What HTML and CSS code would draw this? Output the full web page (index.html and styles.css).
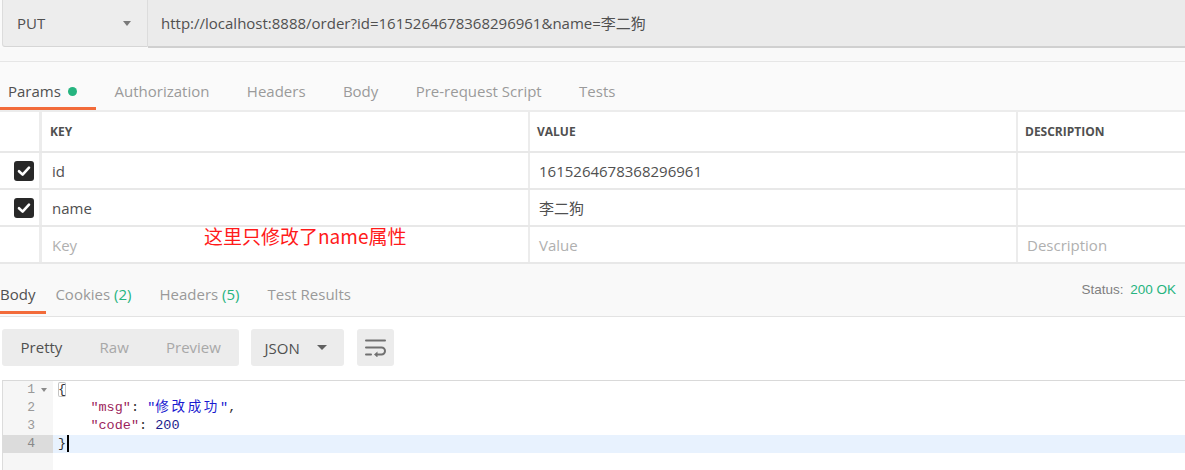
FILE: index.html
```html
<!DOCTYPE html>
<html lang="zh">
<head>
<meta charset="utf-8">
<title>Postman</title>
<link rel="stylesheet" href="styles.css">
</head>
<body>
<div class="request-bar">
  <div class="method"><span>PUT</span><span class="caret"></span></div>
  <div class="url">http://localhost:8888/order?id=1615264678368296961&amp;name=李二狗</div>
</div>
<div class="gap"></div>
<div class="req-tabs">
  <div class="tab first active">Params<span class="dot"></span></div>
  <div class="tab">Authorization</div>
  <div class="tab">Headers</div>
  <div class="tab">Body</div>
  <div class="tab">Pre-request Script</div>
  <div class="tab">Tests</div>
</div>
<div class="params">
  <div class="row head">
    <div class="c-check"></div>
    <div class="c-key">KEY</div>
    <div class="c-val">VALUE</div>
    <div class="c-desc">DESCRIPTION</div>
  </div>
  <div class="row">
    <div class="c-check"><span class="cb"><svg viewBox="0 0 20 20" width="20" height="20"><path d="M5 10.2 L8.6 13.6 L15 6.6" fill="none" stroke="#fff" stroke-width="2.6" stroke-linecap="round" stroke-linejoin="round"/></svg></span></div>
    <div class="c-key">id</div>
    <div class="c-val">1615264678368296961</div>
    <div class="c-desc"></div>
  </div>
  <div class="row">
    <div class="c-check"><span class="cb"><svg viewBox="0 0 20 20" width="20" height="20"><path d="M5 10.2 L8.6 13.6 L15 6.6" fill="none" stroke="#fff" stroke-width="2.6" stroke-linecap="round" stroke-linejoin="round"/></svg></span></div>
    <div class="c-key">name</div>
    <div class="c-val">李二狗</div>
    <div class="c-desc"></div>
  </div>
  <div class="row">
    <div class="c-check"></div>
    <div class="c-key ph">Key</div>
    <div class="c-val ph">Value</div>
    <div class="c-desc ph">Description</div>
  </div>
  <div class="note">这里只修改了name属性</div>
</div>
<div class="res-tabs">
  <div class="rtab first active">Body</div>
  <div class="rtab second">Cookies <span class="cnt">(2)</span></div>
  <div class="rtab">Headers <span class="cnt">(5)</span></div>
  <div class="rtab">Test Results</div>
  <div class="status">Status: <span class="ok">200 OK</span></div>
</div>
<div class="response">
  <div class="toolbar">
    <div class="seg">
      <span class="seg-item on">Pretty</span>
      <span class="seg-item">Raw</span>
      <span class="seg-item">Preview</span>
    </div>
    <div class="select">JSON<span class="caret dark"></span></div>
    <div class="wrap-btn">
      <svg viewBox="0 0 22 18" width="22" height="18"><g fill="none" stroke="#707070" stroke-width="2" stroke-linecap="round"><path d="M1 1.5 H20"/><path d="M1 8.5 H16.5 a3.5 3.5 0 0 1 0 7 H12"/><path d="M1 15.5 H6"/></g><path d="M9 15.5 L12.5 12.5 V18.5 Z" fill="#707070"/></svg>
    </div>
  </div>
  <div class="editor">
    <div class="gutter">
      <div class="gl">1<span class="fold"><span class="tri"></span></span></div>
      <div class="gl">2<span class="fold"></span></div>
      <div class="gl">3<span class="fold"></span></div>
      <div class="gl cur">4<span class="fold"></span></div>
    </div>
    <div class="code">
      <div class="cl"><span class="bm">{</span></div>
      <div class="cl">    <span class="k">"msg"</span>: <span class="s">"<span class="cjk">修改成功</span>"</span>,</div>
      <div class="cl">    <span class="k">"code"</span>: <span class="n">200</span></div>
      <div class="cl cur">}<span class="cursor"></span></div>
    </div>
  </div>
</div>
</body>
</html>
```
FILE: styles.css
```css
* { box-sizing: border-box; }
html, body { margin: 0; padding: 0; }
body {
  width: 1185px;
  height: 470px;
  overflow: hidden;
  background: #fafafa;
  font-family: "Open Sans", "Noto Sans CJK SC", sans-serif;
  font-size: 15px;
  color: #505050;
}

/* request bar */
.request-bar { display: flex; height: 48px; }
.method {
  margin-left: 2px;
  width: 146px;
  height: 47px;
  background: #ededed;
  border-left: 1px solid #dcdcdc;
  border-bottom: 1px solid #d6d6d6;
  border-right: 1px solid #dcdcdc;
  border-bottom-left-radius: 3px;
  display: flex;
  align-items: center;
  padding: 0 16px 0 14px;
  justify-content: space-between;
  color: #505050;
}
.caret {
  width: 0; height: 0;
  border-left: 4.5px solid transparent;
  border-right: 4.5px solid transparent;
  border-top: 5px solid #7a7a7a;
}
.caret.dark { border-left-width: 5px; border-right-width: 5px; border-top: 5px solid #606060; }
.url {
  flex: 1;
  height: 48px;
  background: #ebebeb;
  border-bottom: 2px solid #d0d0d0;
  display: flex;
  align-items: center;
  padding-left: 13px;
  padding-bottom: 2px;
  color: #505050;
}
.gap { height: 14px; background: #f9f9f9; border-bottom: 1px solid #e6e6e6; }

/* request tabs */
.req-tabs {
  display: flex;
  height: 50px;
  background: #fafafa;
  border-bottom: 2px solid #ececec;
}
.tab {
  padding: 19px 18.7px 6px;
  line-height: 20px;
  height: 48px;
  border-bottom: 3px solid transparent;
  color: #9a9a9a;
  display: flex;
  align-items: center;
  align-self: flex-start;
}
.tab.first { padding-left: 8px; padding-right: 19px; }
.tab.active { color: #505050; border-bottom-color: #f26b3a; }
.dot {
  width: 9px; height: 9px;
  border-radius: 50%;
  background: #26b47f;
  margin-left: 7px;
}

/* params table */
.params { position: relative; background: #fff; }
.row {
  display: flex;
  height: 37px;
  border-bottom: 2px solid #e8e8e8;
}
.row.head { height: 41px; font-size: 12px; font-weight: 700; color: #505050; }
.row > div { display: flex; align-items: center; }
.c-check { width: 42px; border-right: 3px solid #ececec; padding-left: 14px; }
.c-key { width: 488px; border-right: 2px solid #ececec; padding-left: 10px; }
.c-val { width: 488px; border-right: 2px solid #ececec; padding-left: 9px; }
.c-desc { flex: 1; padding-left: 9px; }
.head .c-key { padding-left: 8px; }
.head .c-val, .head .c-desc { padding-left: 7px; }
.ph { color: #b0b0b0; }
.cb {
  width: 20px; height: 20px;
  border-radius: 3px;
  background: #282828;
  display: block;
}
.cb svg { display: block; }
.note {
  position: absolute;
  left: 204px;
  top: 111px;
  color: #ff1a1a;
  font-family: "Noto Sans CJK SC", "Noto Sans", sans-serif;
  font-size: 19px;
  line-height: 26px;
}

/* response tabs */
.res-tabs {
  display: flex;
  height: 53px;
  background: #f9f9f9;
  border-bottom: 1px solid #e3e3e3;
}
.rtab {
  padding: 20px 14px 7px;
  line-height: 20px;
  height: 50px;
  border-bottom: 3px solid transparent;
  color: #9a9a9a;
}
.rtab.first { padding-left: 0; padding-right: 11px; }
.rtab.second { padding-left: 9px; }
.rtab.active { color: #505050; border-bottom-color: #f26b3a; }
.cnt { color: #26b47f; }
.status {
  margin-left: auto;
  padding: 16px 9px 0 0;
  line-height: 20px;
  font-family: "Liberation Sans", Arial, sans-serif;
  font-size: 13.5px;
  color: #808080;
}
.ok { color: #26b47f; margin-left: 3px; }

/* response body */
.response { background: #fff; height: 153px; }
.toolbar { display: flex; padding: 12px 0 0 2px; height: 49px; }
.seg {
  display: flex;
  background: #ececec;
  border-radius: 3px;
  height: 37px;
}
.seg-item { padding: 0 18.6px; line-height: 37px; color: #a8a8a8; }
.seg-item.on { color: #505050; }
.select {
  margin-left: 12px;
  width: 93px;
  height: 37px;
  background: #ececec;
  border-radius: 3px;
  display: flex;
  align-items: center;
  justify-content: space-between;
  padding: 0 17px 0 13px;
  color: #505050;
}
.wrap-btn {
  margin-left: 13px;
  width: 37px;
  height: 37px;
  background: #ececec;
  border-radius: 3px;
  display: flex;
  align-items: center;
  justify-content: center;
}

/* editor */
.editor {
  margin: 14px 0 0 2px;
  border-top: 1px solid #d9d9d9;
  border-left: 1px solid #dcdcdc;
  display: flex;
  height: 100px;
  font-family: "Liberation Mono", "Noto Sans CJK SC", monospace;
}
.gutter { width: 50px; background: #f6f6f6; font-size: 13px; color: #999; }
.gl {
  height: 18px;
  line-height: 18px;
  display: flex;
  justify-content: flex-end;
}
.gl.cur { background: #dcdcdc; color: #888; }
.fold { width: 18px; display: flex; align-items: center; }
.tri {
  margin-left: 6px;
  width: 0; height: 0;
  border-left: 3px solid transparent;
  border-right: 3px solid transparent;
  border-top: 4px solid #8a8a8a;
}
.code { flex: 1; font-size: 13.5px; color: #333; }
.cl { height: 18px; line-height: 18px; padding-left: 5px; white-space: pre; }
.cl.cur { background: #e8f2fe; }
.bm {
  display: inline-block;
  line-height: 15px;
  box-shadow: inset 0 0 0 1px #c4c4c4;
  border-radius: 2px;
}
.k { color: #9c1f5c; }
.s { color: #1a1ad0; }
.cjk { letter-spacing: 2.7px; }
.n { color: #1c1c8c; }
.cursor {
  display: inline-block;
  width: 2px;
  height: 17px;
  background: #000;
  vertical-align: top;
  margin-left: 1px;
}
```
